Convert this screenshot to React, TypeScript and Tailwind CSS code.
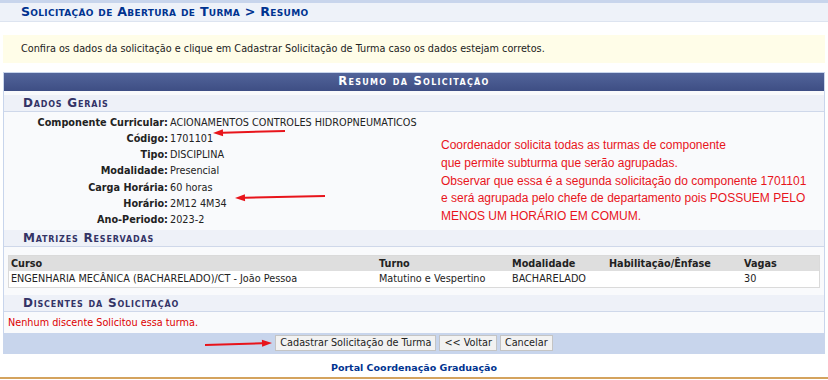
import React from "react";

function Arrow({ x1, y1, x2, y2 }: { x1: number; y1: number; x2: number; y2: number }) {
  const dx = x2 - x1;
  const dy = y2 - y1;
  const len = Math.sqrt(dx * dx + dy * dy);
  const ux = dx / len;
  const uy = dy / len;
  const hl = 10;
  const hw = 3.5;
  const bx = x2 - ux * hl;
  const by = y2 - uy * hl;
  const px = -uy;
  const py = ux;
  const pts = `${x2},${y2} ${bx + px * hw},${by + py * hw} ${bx - px * hw},${by - py * hw}`;
  return (
    <g>
      <line x1={x1} y1={y1} x2={bx} y2={by} stroke="#e8141b" strokeWidth={2} />
      <polygon points={pts} fill="#e8141b" />
    </g>
  );
}

const rows: [string, string][] = [
  ["Componente Curricular:", "ACIONAMENTOS CONTROLES HIDROPNEUMATICOS"],
  ["Código:", "1701101"],
  ["Tipo:", "DISCIPLINA"],
  ["Modalidade:", "Presencial"],
  ["Carga Horária:", "60 horas"],
  ["Horário:", "2M12 4M34"],
  ["Ano-Periodo:", "2023-2"],
];

function SubHeader({ children }: { children: React.ReactNode }) {
  return (
    <div className="h-[17px] bg-[#eef1f8] border-b border-[#cfd8ea] pl-[19px] flex items-center text-[#333366] font-bold [font-variant:small-caps] text-[12px] tracking-[0.8px]">
      {children}
    </div>
  );
}

export default function App() {
  return (
    <div className="relative w-[828px] h-[380px] overflow-hidden bg-white font-['DejaVu_Sans',sans-serif] text-[9.7px] text-[#222]">
      <div className="h-[3px] bg-[#c8d5ec]" />
      <div className="h-[19px] bg-[#eef2f9] border-b border-[#dde4f0] pl-[21px] flex items-center text-[#003390] font-bold [font-variant:small-caps] text-[12.6px] tracking-[0.3px]">
        Solicitação de Abertura de Turma &gt; Resumo
      </div>
      <div className="h-[13px]" />
      <div className="mx-[3px] h-[28px] bg-[#fffde8] pl-[18px] flex items-center">
        Confira os dados da solicitação e clique em Cadastrar Solicitação de Turma caso os dados estejam corretos.
      </div>
      <div className="h-[9px]" />
      <div className="mx-[3px] border border-[#c8d5ec] bg-[#f9fafc]">
        <div className="h-[18px] bg-gradient-to-b from-[#52649a] to-[#3e4e84] flex items-center justify-center text-white font-bold [font-variant:small-caps] text-[11.5px] tracking-[1.3px]">
          Resumo da Solicitação
        </div>
        <div className="h-[4px]" />
        <SubHeader>Dados Gerais</SubHeader>
        <div className="pt-[3px] pb-[2px]">
          {rows.map(([l, v]) => (
            <div key={l} className="flex h-[16.2px] items-center">
              <div className="w-[166px] text-right font-bold pr-[2px]">{l}</div>
              <div>{v}</div>
            </div>
          ))}
        </div>
        <SubHeader>Matrizes Reservadas</SubHeader>
        <div className="h-[8px]" />
        <div className="mx-[4px] border border-[#dadada] bg-white">
          <div className="grid grid-cols-[368px_133px_97px_135px_1fr] h-[15px] items-center bg-[#dedede] font-bold pl-[2px]">
            <div>Curso</div>
            <div>Turno</div>
            <div>Modalidade</div>
            <div>Habilitação/Ênfase</div>
            <div>Vagas</div>
          </div>
          <div className="grid grid-cols-[368px_133px_97px_135px_1fr] h-[16px] items-center pl-[2px]">
            <div>ENGENHARIA MECÂNICA (BACHARELADO)/CT - João Pessoa</div>
            <div>Matutino e Vespertino</div>
            <div>BACHARELADO</div>
            <div></div>
            <div>30</div>
          </div>
        </div>
        <div className="h-[7px]" />
        <SubHeader>Discentes da Solicitação</SubHeader>
        <div className="h-[21px] pl-[4px] flex items-center text-[#dd0000]">Nenhum discente Solicitou essa turma.</div>
        <div className="h-[20px] bg-[#c8d5ec] flex items-center justify-center gap-[3px]">
          <button className="h-[16px] px-[4px] bg-[#f2f2f2] border border-[#c4c4c4] text-[9.7px] text-[#222] leading-none">
            Cadastrar Solicitação de Turma
          </button>
          <button className="h-[16px] px-[4px] bg-[#f2f2f2] border border-[#c4c4c4] text-[9.7px] text-[#222] leading-none">
            &lt;&lt; Voltar
          </button>
          <button className="h-[16px] px-[4px] bg-[#f2f2f2] border border-[#c4c4c4] text-[9.7px] text-[#222] leading-none">
            Cancelar
          </button>
        </div>
      </div>
      <div className="h-[22px] flex items-end justify-center text-[#003390] font-bold text-[9.5px] pb-[1px]">
        Portal Coordenação Graduação
      </div>
      <div className="h-[2px] mt-[1px] bg-[#d4a35e]" />

      <div className="absolute left-[441px] top-[137px] font-['Liberation_Sans',Arial,sans-serif] text-[12px] leading-[17.8px] text-[#e8141b]">
        <div>Coordenador solicita todas as turmas de componente</div>
        <div>que permite subturma que serão agrupadas.</div>
        <div>Observar que essa é a segunda solicitação do componente 1701101</div>
        <div>e será agrupada pelo chefe de departamento pois POSSUEM PELO</div>
        <div>MENOS UM HORÁRIO EM COMUM.</div>
      </div>
      <svg className="absolute left-0 top-0 pointer-events-none" width={828} height={380}>
        <Arrow x1={285} y1={131} x2={213} y2={133} />
        <Arrow x1={325} y1={196} x2={235} y2={198} />
        <Arrow x1={205} y1={345} x2={272} y2={343} />
      </svg>
    </div>
  );
}
